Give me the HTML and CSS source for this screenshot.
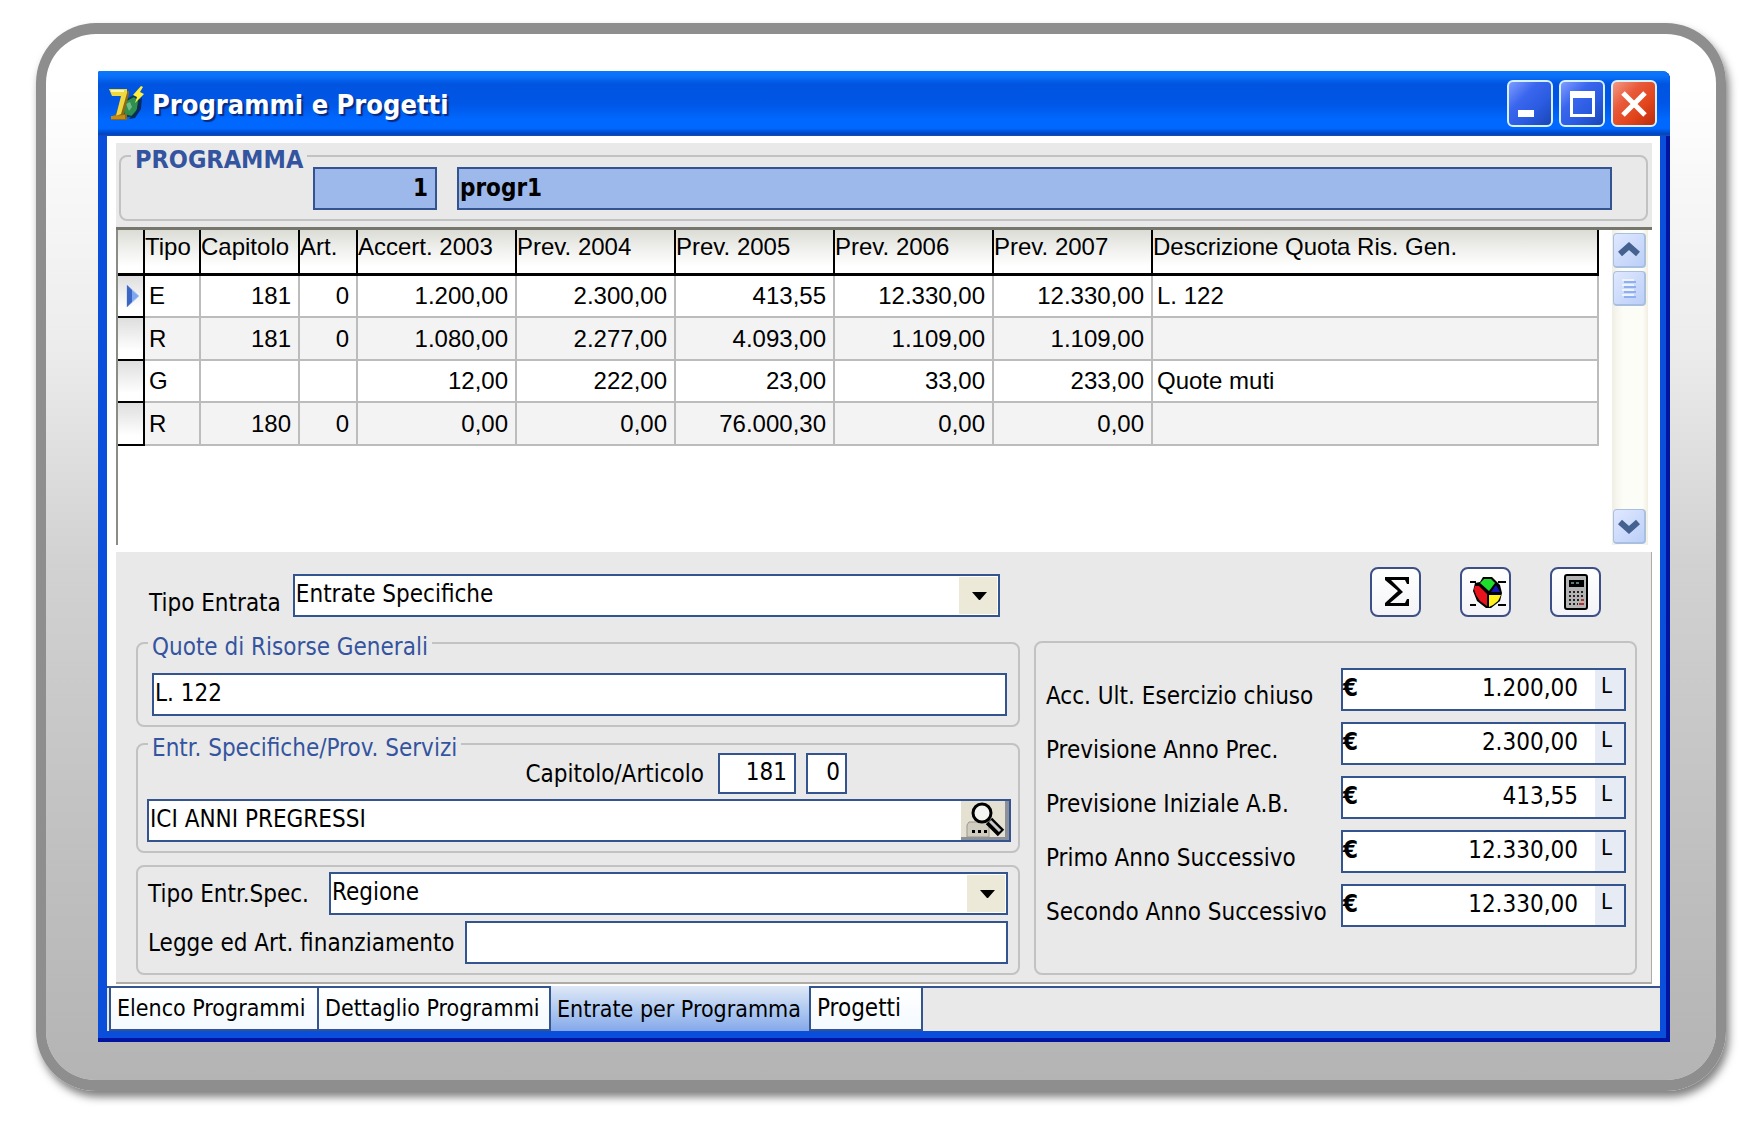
FILE: index.html
```html
<!DOCTYPE html>
<html lang="it">
<head>
<meta charset="utf-8">
<title>Programmi e Progetti</title>
<link rel="stylesheet" href="styles.css">
</head>
<body>
<div class="frame">
<main class="window">
  <header class="titlebar">
    <svg class="app-icon" width="36" height="38" viewBox="0 0 36 38" aria-hidden="true">
      <path d="M17 16l9-5 5 4-1 10-6 7-8-2-2-7z" fill="#2f8f4e" stroke="#0b3c4a" stroke-width="2"/>
      <path d="M31 16l3-4-1 12-6 9-6 1 7-7z" fill="#0b2a5c"/>
      <path d="M18 19l4-2 2 5-3 4z" fill="#6fb98a"/>
      <path d="M4 6h17v3l-5 20h3v6H3v-3l5-3 6-19H7z" fill="#8a6a14"/>
      <path d="M1 4h18v4l-6 21-5 2 5-20H4z" fill="#f0d840"/>
      <path d="M3 5h13v2H3z" fill="#fff6a8"/>
      <path d="M3 31l14-1v4H3z" fill="#c48a1a"/>
      <path d="M33 1l-8 9 4 2-2 6 9-9-4-2 3-5z" fill="#ffee3a"/>
    </svg>
    <h1 class="title">Programmi e Progetti</h1>
    <div class="window-buttons">
      <button class="win-btn" type="button" aria-label="Riduci a icona"><svg width="42" height="43" viewBox="0 0 42 43"><path d="M9 28h16v7H9z" fill="#fff"/></svg></button>
      <button class="win-btn" type="button" aria-label="Ingrandisci"><svg width="42" height="43" viewBox="0 0 42 43"><path d="M9 9h25v26H9zM12 16v16h19V16z" fill="#fff" fill-rule="evenodd"/></svg></button>
      <button class="win-btn close" type="button" aria-label="Chiudi"><svg width="42" height="43" viewBox="0 0 42 43"><path d="M10 11l22 22M32 11L10 33" stroke="#fff" stroke-width="5"/></svg></button>
    </div>
  </header>

  <div class="client">
    <section class="panel">
      <fieldset class="group programma">
        <legend class="strong">PROGRAMMA</legend>
        <div class="programma-fields">
          <input class="field key number" type="text" value="1" aria-label="Codice programma">
          <input class="field key" type="text" value="progr1" aria-label="Descrizione programma">
        </div>
      </fieldset>

      <div class="grid">
        <div class="grid-body">
          <table>
            <colgroup><col class="c-mark"><col class="c-tipo"><col class="c-cap"><col class="c-art"><col class="c-num"><col class="c-num"><col class="c-num"><col class="c-num"><col class="c-num"><col></colgroup>
            <thead>
              <tr><th class="mark"></th><th>Tipo</th><th>Capitolo</th><th>Art.</th><th>Accert. 2003</th><th>Prev. 2004</th><th>Prev. 2005</th><th>Prev. 2006</th><th>Prev. 2007</th><th>Descrizione Quota Ris. Gen.</th></tr>
            </thead>
            <tbody>
              <tr><td class="mark"><svg width="16" height="24" viewBox="0 0 16 24" aria-hidden="true"><path d="M2 1l12 11L2 23z" fill="#7da7ee" stroke="#b7cdf4"/><path d="M2 1l5 5v12l-5 5z" fill="#3c66c4"/></svg></td><td>E</td><td class="n">181</td><td class="n">0</td><td class="n">1.200,00</td><td class="n">2.300,00</td><td class="n">413,55</td><td class="n">12.330,00</td><td class="n">12.330,00</td><td>L. 122</td></tr>
              <tr><td class="mark"></td><td>R</td><td class="n">181</td><td class="n">0</td><td class="n">1.080,00</td><td class="n">2.277,00</td><td class="n">4.093,00</td><td class="n">1.109,00</td><td class="n">1.109,00</td><td></td></tr>
              <tr><td class="mark"></td><td>G</td><td class="n"></td><td class="n"></td><td class="n">12,00</td><td class="n">222,00</td><td class="n">23,00</td><td class="n">33,00</td><td class="n">233,00</td><td>Quote muti</td></tr>
              <tr><td class="mark"></td><td>R</td><td class="n">180</td><td class="n">0</td><td class="n">0,00</td><td class="n">0,00</td><td class="n">76.000,30</td><td class="n">0,00</td><td class="n">0,00</td><td></td></tr>
            </tbody>
          </table>
        </div>
        <div class="scrollbar">
          <button class="scroll-btn" type="button" aria-label="Scorri su"><svg width="24" height="20" viewBox="0 0 24 20"><path d="M3 14l9-8 9 8" fill="none" stroke="#44618f" stroke-width="6"/></svg></button>
          <div class="thumb"><svg width="16" height="20" viewBox="0 0 16 20" aria-hidden="true"><path d="M1 2h12M1 7h12M1 12h12M1 17h12" stroke="#eef4ff" stroke-width="2"/><path d="M3 4h12M3 9h12M3 14h12M3 19h12" stroke="#8fb0ee" stroke-width="2"/></svg></div>
          <button class="scroll-btn down" type="button" aria-label="Scorri giù"><svg width="24" height="20" viewBox="0 0 24 20"><path d="M3 6l9 8 9-8" fill="none" stroke="#44618f" stroke-width="6"/></svg></button>
        </div>
      </div>

      <form class="form">
        <div class="top-row">
          <label class="low" for="tipo-entrata">Tipo Entrata</label>
          <span class="select">
            <select id="tipo-entrata" class="field"><option>Entrate Specifiche</option></select>
            <svg class="arrow" width="38" height="37" viewBox="0 0 38 37" aria-hidden="true"><path d="M0 0h38v37H0z" fill="#ece9d8"/><path d="M13 15h15l-7 8h-1z" fill="#000"/></svg>
          </span>
        </div>
        <div class="toolbar">
          <button class="tool" type="button" aria-label="Somma"><svg width="46" height="46" viewBox="0 0 46 46"><path d="M12 8h24v7h-2l-2-4H18l12 12-13 11h15l2-4h2v7H12v-3l13-12L12 11z" fill="#000"/></svg></button>
          <button class="tool" type="button" aria-label="Grafico"><svg width="46" height="46" viewBox="0 0 46 46"><path d="M7 13h6M35 13h8M7 36h6M35 36h8" stroke="#000" stroke-width="2"/><path d="M20 8h9l8 8 2 8-2 8-9 7h-5l-9-7-4-10 2-8 5-1z" fill="#000"/><path d="M17 14l4-4h7l4 4-6 8z" fill="#1ee02c"/><path d="M12 17h4l8 8v12l-7-5-4-6-2-6z" fill="#e8131b"/><path d="M33 16l4 7h-9z" fill="#1218b8"/><path d="M26 26h12l-3 6-5 4-4 2z" fill="#fff01e"/></svg></button>
          <button class="tool" type="button" aria-label="Calcolatrice"><svg width="46" height="46" viewBox="0 0 46 46"><rect x="12" y="6" width="22" height="34" rx="2" fill="#b4b4b4" stroke="#000" stroke-width="2"/><path d="M16 11h15v7H16z" fill="#000"/><path d="M18 14h10" stroke="#5a7a7a" stroke-width="2" stroke-dasharray="3 2"/><path d="M16 23h15M16 27h15M16 31h15M16 35h9" stroke="#222" stroke-width="2" stroke-dasharray="2 2"/><path d="M26 35h5M28 31h3" stroke="#a33" stroke-width="2"/></svg></button>
        </div>

        <div class="left">
          <fieldset class="group">
            <legend>Quote di Risorse Generali</legend>
            <div class="quote-body">
              <input class="field" type="text" value="L. 122" aria-label="Quote di Risorse Generali">
            </div>
          </fieldset>
          <fieldset class="group">
            <legend>Entr. Specifiche/Prov. Servizi</legend>
            <div class="entr-body">
              <div class="cap-row">
                <label for="capitolo">Capitolo/Articolo</label>
                <input id="capitolo" class="field number cap" type="text" value="181">
                <input class="field number art" type="text" value="0" aria-label="Articolo">
              </div>
              <div class="lookup">
                <input class="field" type="text" value="ICI ANNI PREGRESSI" aria-label="Descrizione capitolo">
                <button class="search" type="button" aria-label="Cerca"><svg width="48" height="39" viewBox="0 0 48 39"><path d="M0 0h48v39H0z" fill="#e4e1d2"/><path d="M44 0h4v39H0v-3h44z" fill="#8b909b"/><path d="M6 24l2-3h20v15H6z" fill="#d0cdc0" stroke="#9a978a"/><path d="M11 29h3v3h-3zM17 29h3v3h-3zM23 29h3v3h-3z" fill="#000"/><path d="M28 20l12 12" stroke="#000" stroke-width="9"/><path d="M29 20l10 10" stroke="#c9c9c9" stroke-width="3"/><circle cx="21" cy="12" r="9" fill="#f4f4f0" stroke="#000" stroke-width="3"/></svg></button>
              </div>
            </div>
          </fieldset>
          <div class="group spec">
            <div class="line wide">
              <label for="tipo-spec">Tipo Entr.Spec.</label>
              <span class="select">
                <select id="tipo-spec" class="field"><option>Regione</option></select>
                <svg class="arrow" width="38" height="37" viewBox="0 0 38 37" aria-hidden="true"><path d="M0 0h38v37H0z" fill="#ece9d8"/><path d="M13 15h15l-7 8h-1z" fill="#000"/></svg>
              </span>
            </div>
            <div class="line">
              <label for="legge">Legge ed Art. finanziamento</label>
              <input id="legge" class="field" type="text">
            </div>
          </div>
        </div>

        <div class="group amounts">
          <div class="amount"><label for="a1">Acc. Ult. Esercizio chiuso</label><div class="money"><span>€</span><input id="a1" type="text" value="1.200,00"><button type="button">L</button></div></div>
          <div class="amount"><label for="a2">Previsione Anno Prec.</label><div class="money"><span>€</span><input id="a2" type="text" value="2.300,00"><button type="button">L</button></div></div>
          <div class="amount"><label for="a3">Previsione Iniziale A.B.</label><div class="money"><span>€</span><input id="a3" type="text" value="413,55"><button type="button">L</button></div></div>
          <div class="amount"><label for="a4">Primo Anno Successivo</label><div class="money"><span>€</span><input id="a4" type="text" value="12.330,00"><button type="button">L</button></div></div>
          <div class="amount"><label for="a5">Secondo Anno Successivo</label><div class="money"><span>€</span><input id="a5" type="text" value="12.330,00"><button type="button">L</button></div></div>
        </div>
      </form>
    </section>

    <nav class="tabs">
      <button class="tab elenco" type="button">Elenco Programmi</button>
      <button class="tab dettaglio" type="button">Dettaglio Programmi</button>
      <button class="tab entrate active" type="button">Entrate per Programma</button>
      <button class="tab progetti" type="button">Progetti</button>
    </nav>
  </div>
</main>
</div>
</body>
</html>
```
FILE: styles.css
```css
:root {
  --ui: "DejaVu Sans Condensed", "Noto Sans", sans-serif;
  --grid: "Liberation Sans", Arial, sans-serif;
  --line: #34548f;
  --face: #e9e9e9;
}

* { box-sizing: border-box; }

body {
  margin: 0;
  padding: 23px 36px 37px;
  background: #fff;
  color: #000;
  font: 24px/28px var(--ui);
}

button, input, select { font: inherit; color: inherit; margin: 0; border-radius: 0; }
button { padding: 0; border: 0; display: flex; align-items: center; justify-content: center; }
svg { display: block; flex: none; }

.frame {
  padding: 37px 46px 38px 52px;
  border: 11px solid #8e8e8e;
  border-width: 11px 10px;
  border-radius: 60px;
  background: linear-gradient(#fff 5%, #ececec 30%, #d2d2d2 50%, #bfbfbf 80%, #b4b4b4);
  background-clip: padding-box;
  box-shadow: 3px 6px 8px rgba(0, 0, 0, .5);
}

/* Window chrome */
.window {
  padding: 0 10px 11px 9px;
  border-radius: 2px 8px 0 0;
  background: #0a4fdc;
  box-shadow: inset -4px -4px 0 #0014a0;
}

.titlebar {
  display: flex;
  align-items: center;
  height: 65px;
  margin: 0 -10px 0 -9px;
  padding: 0 13px 0 10px;
  border-radius: 2px 8px 0 0;
  background: linear-gradient(#0a78fa, #0a70f8 8%, #0054e0 20%, #0056e6 50%, #0068ff 75%, #0068ff 88%, #0044c0 97%, #1c4db0);
}

.title {
  flex: 1;
  margin: 2px 0 0 8px;
  color: #fff;
  font: bold 27px/36px var(--ui);
  text-shadow: 2px 2px 1px #0a2a80;
}

.window-buttons { display: flex; gap: 6px; }

.win-btn {
  width: 46px;
  height: 47px;
  border: 2px solid #d6f2ff;
  border-radius: 6px;
  background: linear-gradient(135deg, #7f9cff, #3a66ee 35%, #2a5be0 65%, #1a46b4);
}

.win-btn.close { background: linear-gradient(135deg, #f39a84, #e8593a 35%, #e2451c 65%, #b82c0c); }

.client { padding-top: 7px; background: #fff; }

.panel { margin: 0 8px 0 9px; padding-top: 2px; background: var(--face); }

/* Boxes and fields */
.group {
  min-width: 0;
  margin: 0;
  padding: 0;
  border: 2px solid #c2c2c2;
  border-radius: 8px;
}

legend {
  margin-left: 10px;
  padding: 8px 4px 0;
  color: #34549f;
  line-height: 14px;
}

legend.strong { font-weight: bold; font-size: 25px; }

.field {
  display: block;
  width: 100%;
  min-width: 0;
  height: 43px;
  padding: 0 0 3px 1px;
  border: 2px solid var(--line);
  outline: 0;
  background: #fff;
}

.field.number { padding-right: 7px; text-align: right; }
.field.key { padding-bottom: 2px; background: #9db8ea; font-weight: bold; }

.programma { margin: 0 4px 0 3px; }

.programma-fields {
  display: grid;
  grid-template-columns: 124px minmax(0, 1fr);
  gap: 20px;
  padding: 0 34px 9px 192px;
}

/* Data grid */
.grid {
  display: flex;
  gap: 13px;
  min-height: 325px;
  margin-top: 6px;
  padding: 0 4px 7px 0;
  border-top: 3px solid #77766c;
  background: #fff;
  font-family: var(--grid);
}

.grid-body { flex: 1; min-width: 0; border-left: 2px solid #8a8d86; }

table {
  width: 100%;
  table-layout: fixed;
  border-collapse: separate;
  border-spacing: 0;
}

.c-mark { width: 27px; }
.c-tipo { width: 56px; }
.c-cap { width: 99px; }
.c-art { width: 58px; }
.c-num { width: 159px; }

th, td { padding: 0 0 0 4px; text-align: left; white-space: nowrap; }

th {
  height: 46px;
  padding: 3px 0 0;
  border: solid #000;
  border-width: 0 2px 3px 0;
  background: linear-gradient(#dcdcd6, #f2f2f0 50%, #fff 85%);
  font-weight: normal;
  vertical-align: top;
}

td { height: 42px; border: solid #bcbcbc; border-width: 0 2px 2px 0; }
tbody tr:nth-child(even) td { height: 43px; }
tbody tr:nth-child(even) { background: #f3f3f3; }
td.n { padding: 0 7px 0 0; text-align: right; }
td.mark { padding-left: 7px; border-color: #000; background: linear-gradient(#dedede, #fff 80%); }

.scrollbar {
  display: flex;
  flex-direction: column;
  width: 36px;
  padding: 3px 2px 1px 1px;
  background: linear-gradient(90deg, #f0efe6, #fdfdf8 30%, #fdfdf8 85%, #f0efe0);
}

.scroll-btn, .thumb {
  display: flex;
  align-items: center;
  justify-content: center;
  height: 35px;
  border: 1px solid #a9bfe0;
  border-width: 1px 2px 2px 1px;
  border-radius: 4px;
  background: linear-gradient(135deg, #dfe8ff, #bccff8);
}

.thumb { margin-top: 3px; }
.scroll-btn.down { margin-top: auto; }

/* Detail form */
.form {
  display: grid;
  grid-template-columns: minmax(0, 1fr) 603px;
  column-gap: 14px;
  padding: 15px 14px 7px 20px;
  border: solid #aeaca4;
  border-width: 0 1px 2px 0;
}

label { white-space: nowrap; }

.top-row, .toolbar { height: 50px; margin-bottom: 15px; }
.top-row { display: flex; align-items: flex-end; gap: 12px; padding: 0 20px 0 13px; }
.low { align-self: flex-end; }

.select { display: grid; flex: 1; min-width: 0; }
.select > * { grid-area: 1 / 1; }
.select select { appearance: none; }
.arrow { place-self: center end; margin-right: 3px; pointer-events: none; }

.toolbar { display: flex; gap: 39px; justify-content: flex-end; padding-right: 36px; }

.tool {
  width: 51px;
  border: 2px solid #3c4f86;
  border-radius: 8px;
  background: linear-gradient(#fff, #f4f4f8);
}

.quote-body { padding: 19px 11px 9px 14px; }
.left .group + .group { margin-top: 6px; }
.entr-body { padding: 0 7px 9px 9px; }

.cap-row {
  display: grid;
  grid-template-columns: 1fr 78px 41px;
  align-items: center;
  column-gap: 10px;
  width: 700px;
  margin: -2px 0 5px;
}

.cap-row label { justify-self: end; margin-right: 4px; }
.cap-row .field { height: 41px; }
.field.art { padding-right: 5px; }

.lookup { display: grid; }
.lookup > * { grid-area: 1 / 1; }
.search { place-self: center end; margin-right: 2px; }

.left .spec { display: grid; gap: 6px; margin-top: 11px; padding: 5px 10px 9px; }
.left .group + .spec { margin-top: 12px; }
.line { display: flex; align-items: center; gap: 10px; }
.line.wide { gap: 20px; }
.line .field { flex: 1; }

.amounts { display: grid; gap: 11px; align-content: start; margin-top: 9px; padding: 25px 9px 0 10px; }
.amount { display: flex; justify-content: space-between; }
.amount label { padding-top: 14px; }

.money {
  display: flex;
  width: 285px;
  height: 43px;
  border: 2px solid var(--line);
  background: #fff;
}

.money span { width: 20px; padding-top: 4px; font-weight: bold; }
.money input { flex: 1; min-width: 0; padding: 0 17px 4px 0; border: 0; outline: 0; background: none; text-align: right; }
.money button { width: 29px; padding: 0 6px 8px 0; background: #e6ebf4; font: 22px/28px var(--ui); }

/* Page tabs */
.tabs {
  display: flex;
  height: 45px;
  margin-top: 2px;
  padding-left: 2px;
  border-top: 2px solid var(--line);
  background: var(--face);
}

.tab {
  justify-content: flex-start;
  margin-top: -2px;
  padding: 0 0 2px 6px;
  border: 2px solid var(--line);
  border-left-width: 0;
  background: linear-gradient(#fff, #f4faff);
  font-size: 23px;
  white-space: nowrap;
}

.tab.elenco { width: 210px; border-left-width: 2px; }
.tab.dettaglio { width: 232px; }
.tab.entrate { width: 258px; }
.tab.progetti { width: 114px; border-left-width: 2px; font-size: 24px; }
.tab.active { padding-bottom: 0; border: 0; background: linear-gradient(#dfe8f6, #a8c4f0 60%, #86a8ea); }
```
